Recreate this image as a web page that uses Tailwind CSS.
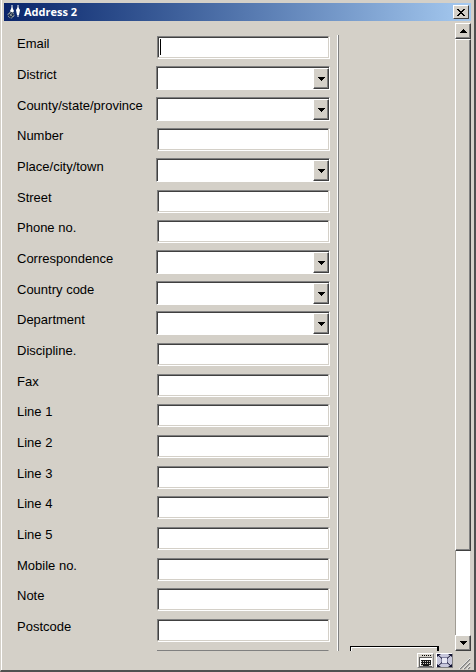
<!DOCTYPE html>
<html lang="en">
<head>
  <meta charset="UTF-8" />
  <meta name="viewport" content="width=device-width, initial-scale=1.0" />
  <title>Address 2</title>
  <script src="https://cdn.jsdelivr.net/npm/@tailwindcss/browser@4"></script>
</head>
<body class="h-screen bg-[#d4d0c8] font-['Liberation_Sans',sans-serif] text-[13px] text-black">

  <!-- Window frame -->
  <div class="h-full flex flex-col border-l border-l-[#d4d0c8] border-r-2 border-b-2 border-r-[#505050] border-b-[#505050]">
    <div class="flex-1 min-h-0 flex flex-col border-l border-l-white pl-[2px] pr-[3px] pt-[3px]">

      <!-- Title bar -->
      <header class="h-[18px] shrink-0 flex items-center bg-linear-to-r from-[#0a246a] to-[#a6caf0] pl-[3px] pr-[2px]">
        <svg class="w-4 h-4 mr-px" viewBox="0 0 16 16" aria-hidden="true">
          <path d="M5 1v4M11 1v12" stroke="#fff" stroke-width="1" />
          <path d="M5 3l2 4-2 3-2-3zM11 3l2 3-1 5h-2l-1-5z" fill="#fff" />
          <circle cx="4" cy="11" r="3" fill="#1c2c50" stroke="#9aa5a5" stroke-dasharray="2 1" />
          <path d="M3 12l3-4M2 9l4 4" stroke="#87918f" />
        </svg>
        <h1 class="flex-1 font-['Open_Sans',sans-serif] font-bold text-[11px] leading-4 text-white">Address 2</h1>
        <button type="button" aria-label="Close" class="w-4 h-[14px] flex items-center justify-center bg-[#d4d0c8] border border-t-white border-l-white border-r-[#404040] border-b-[#404040]">
          <svg class="w-2 h-[7px]" viewBox="0 0 8 7" shape-rendering="crispEdges">
            <path d="M0 0h2v1h1v1h2V1h1V0h2v1H7v1H6v1H5v1h1v1h1v1h1v1H6V6H5V5H3v1H2v1H0V6h1V5h1V4h1V3H2V2H1V1H0z" />
          </svg>
        </button>
      </header>

      <!-- Form, side panel and scroll bar -->
      <main class="flex-1 min-h-0 flex overflow-hidden">
        <form id="address-form" class="flex-1 min-w-0 pt-[11px] pl-[13px] pr-[7px] [&>*:nth-child(3n)]:h-[30px]"></form>

        <div class="w-[2px] mt-[14px] bg-white border-r border-r-[#808080]"></div>

        <aside class="w-[116px] pl-[11px] pr-4 flex flex-col justify-end">
          <button type="button" aria-label="OK" class="w-full h-[5px] border-t border-l border-r-2 border-black bg-[#d4d0c8] shadow-[inset_1px_1px_0_#fff]"></button>
        </aside>

        <div class="w-4 mt-[2px] flex flex-col">
          <button type="button" aria-label="Scroll up" class="h-4 shrink-0 flex items-center justify-center bg-[#d4d0c8] border border-t-white border-l-white border-r-[#404040] border-b-[#404040] shadow-[inset_-1px_-1px_0_#808080]">
            <svg class="w-[7px] h-1" viewBox="0 0 7 4" shape-rendering="crispEdges"><path d="M3 0h1v1h1v1h1v1h1v1H0V3h1V2h1V1h1z" /></svg>
          </button>
          <div class="grow-[512] bg-[#d4d0c8] border border-t-white border-l-white border-r-[#404040] border-b-[#404040] shadow-[inset_-1px_-1px_0_#808080]"></div>
          <div class="grow-[84] bg-white border-l border-r border-l-[#a09c94] border-r-[#d4d0c8]"></div>
          <button type="button" aria-label="Scroll down" class="h-4 shrink-0 flex items-center justify-center bg-[#d4d0c8] border border-t-white border-l-white border-r-[#404040] border-b-[#404040] shadow-[inset_-1px_-1px_0_#808080]">
            <svg class="w-[7px] h-1" viewBox="0 0 7 4" shape-rendering="crispEdges"><path d="M0 0h7v1H6v1H5v1H4v1H3V3H2V2H1V1H0z" /></svg>
          </button>
        </div>
      </main>

      <!-- Status bar -->
      <footer class="h-[19px] shrink-0 flex items-center justify-end gap-[2px]">
        <button type="button" aria-label="Keyboard" class="w-[17px] h-[15px] bg-[#d4d0c8] border border-t-white border-l-white border-r-[#808080] border-b-[#808080]">
          <svg class="w-[15px] h-[13px]" viewBox="0 0 15 13" shape-rendering="crispEdges">
            <path d="M4 1.500h10" stroke="#000" stroke-dasharray="1 1" />
            <path d="M1 4h13v8H1z" fill="#fff" />
            <path d="M1 3.500h13M1.500 4v8M1 12.500h13" stroke="#606060" />
            <path d="M3 6h10v6H3z" fill="#181818" />
            <path d="M3 7.500h10M3 9.500h10" stroke="#d4d0c8" stroke-dasharray="1 1" />
            <path d="M3 11.500h2M11 11.500h2" stroke="#d4d0c8" />
          </svg>
        </button>
        <button type="button" aria-label="Full size" class="w-[17px] h-[15px] bg-[#c8c8dc] border border-t-white border-l-white border-r-[#808080] border-b-[#808080]">
          <svg class="w-[15px] h-[13px]" viewBox="0 0 15 13">
            <path d="M4.500 3.500h6v6h-6z" fill="#e8e8f4" stroke="#8080a0" />
            <path d="M1 1l4 3.500M14 1l-4 3.500M1 12l4-3.500M14 12l-4-3.500" stroke="#101030" />
            <path d="M0 0h4L0 3zM15 0h-4l4 3zM0 13h4l-4-3zM15 13h-4l4-3z" fill="#101030" />
          </svg>
        </button>
        <svg class="w-3 h-3 ml-1 self-end" viewBox="0 0 12 12" aria-hidden="true">
          <path d="M1 11L11 1M5 11l6-6M9 11l2-2" stroke="#808080" stroke-width="1.500" />
          <path d="M0 11L11 0M4 11l7-7M8 11l3-3" stroke="#fff" stroke-width=".7" />
        </svg>
      </footer>
    </div>
  </div>

  <script>
    const fields = [
      { id: "email", label: "Email", type: "text" },
      { id: "district", label: "District", type: "select" },
      { id: "county", label: "County/state/province", type: "select" },
      { id: "number", label: "Number", type: "text" },
      { id: "place", label: "Place/city/town", type: "select" },
      { id: "street", label: "Street", type: "text" },
      { id: "phone", label: "Phone no.", type: "text" },
      { id: "correspondence", label: "Correspondence", type: "select" },
      { id: "country", label: "Country code", type: "select" },
      { id: "department", label: "Department", type: "select" },
      { id: "discipline", label: "Discipline.", type: "text" },
      { id: "fax", label: "Fax", type: "text" },
      { id: "line1", label: "Line 1", type: "text" },
      { id: "line2", label: "Line 2", type: "text" },
      { id: "line3", label: "Line 3", type: "text" },
      { id: "line4", label: "Line 4", type: "text" },
      { id: "line5", label: "Line 5", type: "text" },
      { id: "mobile", label: "Mobile no.", type: "text" },
      { id: "note", label: "Note", type: "text" },
      { id: "postcode", label: "Postcode", type: "text" },
      { id: "region", label: "", type: "text" }
    ];

    // Text box; the first one carries the caret
    function textBox(field, index) {
      return `
        <div class="relative flex-1 mt-1 ml-px mr-px">
          <input type="text" id="${field.id}" ${field.label ? "" : 'aria-label="Region"'} class="block w-full h-[22px] px-1 bg-white outline-none border border-t-[#808080] border-l-[#808080] border-r-[#d4d0c8] border-b-[#d4d0c8] shadow-[inset_1px_1px_0_#404040,1px_1px_0_#fff]">
          ${index === 0 ? '<span class="absolute left-[3px] top-[3px] w-px h-4 bg-black"></span>' : ""}
        </div>`;
    }

    // Drop-down with a raised arrow button over its right end
    function dropDown(field) {
      return `
        <div class="relative flex-1 mt-[3px]">
          <select id="${field.id}" class="block w-full h-6 appearance-none bg-white outline-none border border-t-[#808080] border-l-[#808080] border-r-white border-b-white shadow-[inset_1px_1px_0_#404040]"><option></option></select>
          <span class="absolute right-px top-[2px] w-4 h-[21px] pointer-events-none flex items-center justify-center bg-[#d4d0c8] border border-t-white border-l-white border-r-[#404040] border-b-[#404040] shadow-[inset_-1px_-1px_0_#808080]">
            <svg class="w-[7px] h-1" viewBox="0 0 7 4" shape-rendering="crispEdges"><path d="M0 0h7v1H6v1H5v1H4v1H3V3H2V2H1V1H0z" /></svg>
          </span>
        </div>`;
    }

    document.getElementById("address-form").innerHTML = fields.map((field, index) => `
      <div class="h-[31px] flex items-start">
        <label for="${field.id}" class="w-[139px] mt-1 leading-4">${field.label}</label>
        ${field.type === "select" ? dropDown(field) : textBox(field, index)}
      </div>`).join("");
  </script>

</body>
</html>
